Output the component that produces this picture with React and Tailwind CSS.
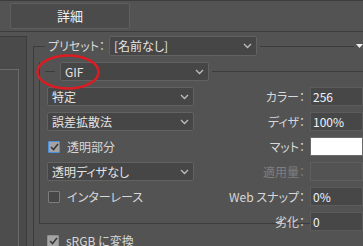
const LINE = 'bg-[#3c3c3c]';

function Chevron() {
  return (
    <svg width="9" height="6" viewBox="0 0 9 6" className="shrink-0">
      <polyline points="1,1 4.5,4.5 8,1" fill="none" stroke="#bdbdbd" strokeWidth="1.3" />
    </svg>
  );
}

function Dropdown({ label, className = '' }) {
  return (
    <div
      className={`flex items-center justify-between h-[19px] rounded-[2px] border border-[#626262] bg-[#464646] pl-[4px] pr-[4px] text-[#e4e4e4] ${className}`}
    >
      <span className="leading-none">{label}</span>
      <Chevron />
    </div>
  );
}

function Check({ checked, focus }) {
  return (
    <div
      className={`flex items-center justify-center w-[12px] h-[12px] shrink-0 rounded-[1px] border ${
        focus ? 'border-[#4a8fe0]' : checked ? 'border-[#8f8f8f]' : 'border-[#7c7c7c]'
      } ${checked ? 'bg-[#a3a3a3]' : 'bg-[#474747]'}`}
    >
      {checked ? (
        <svg width="9" height="8" viewBox="0 0 9 8">
          <polyline points="1,4 3.5,6.5 8,1" fill="none" stroke="#3a3a3a" strokeWidth="1.6" />
        </svg>
      ) : null}
    </div>
  );
}

function Field({ label, value, disabled, swatch }) {
  return (
    <div className="flex items-center justify-end h-[19px]">
      <span className={`mr-[5px] ${disabled ? 'text-[#7f7f7f]' : 'text-[#d8d8d8]'}`}>{label}</span>
      <div
        className={`w-[53px] h-[19px] shrink-0 border flex items-center pl-[2px] ${
          swatch
            ? 'bg-white border-[#6a6a6a] h-[16px]'
            : disabled
            ? 'bg-[#535353] border-[#5e5e5e]'
            : 'bg-[#474747] border-[#5c5c5c]'
        } text-[#eef3ff]`}
      >
        {value}
      </div>
    </div>
  );
}

export default function App() {
  return (
    <div className="relative w-[363px] h-[246px] overflow-hidden bg-[#535353] text-[12px] text-[#d8d8d8] font-['Noto_Sans_CJK_JP',sans-serif] [font-feature-settings:'palt']">
      {/* top band */}
      <div className="h-[32px] border-t border-b border-[#3c3c3c] pt-[2px] pl-[10px]">
        <div className="flex items-center justify-center w-[120px] h-[26px] rounded-[2px] border border-[#5f5f5f] bg-[#4b4b4b] text-[13px] text-[#efefef]">
          詳細
        </div>
      </div>

      <div className="flex">
        {/* left preview panel */}
        <div className="mt-[4px] w-[27px] h-[210px] shrink-0 border-t border-r border-[#3c3c3c] bg-[#4a4a4a] pt-[32px]">
          <div className="w-[19px] h-[200px] border-t border-r border-[#6b6b6b] bg-[#4d4d4d]" />
        </div>

        {/* settings */}
        <div className="ml-[6px] flex-1 mt-[14px] border-l border-[#3c3c3c]">
          <div className="-mt-[10px] flex items-center h-[20px]">
            <div className={`w-[11px] h-px ${LINE}`} />
            <span className="ml-[3px] w-[61px] leading-none">プリセット：</span>
            <Dropdown label="[名前なし]" className="w-[148px] h-[20px]" />
            <div className={`ml-[3px] flex-1 h-px ${LINE}`} />
            <svg width="7" height="5" viewBox="0 0 7 5" className="ml-[2px] shrink-0">
              <polygon points="0,0 7,0 3.5,4" fill="#f0f0f0" />
            </svg>
          </div>

          <div className="ml-[5px] mt-[15px] h-[162px] border-l border-b border-[#3c3c3c]">
            <div className="-mt-[9px] flex items-center h-[19px]">
              <div className={`ml-[5px] w-[10px] h-px ${LINE}`} />
              <Dropdown label="GIF" className="ml-[5px] w-[149px]" />
              <div className={`ml-[3px] flex-1 h-px ${LINE}`} />
            </div>

            <div className="mt-[6px] grid grid-cols-[155px_1fr] gap-y-[6px] grid-rows-[repeat(6,19px)]">
              <Dropdown label="特定" className="ml-[7px] w-[147px]" />
              <Field label="カラー：" value="256" />

              <Dropdown label="誤差拡散法" className="ml-[7px] w-[147px]" />
              <Field label="ディザ：" value="100%" />

              <div className="flex items-center ml-[8px]">
                <Check checked focus />
                <span className="ml-[7px]">透明部分</span>
              </div>
              <Field label="マット：" swatch />

              <Dropdown label="透明ディザなし" className="ml-[7px] w-[147px]" />
              <Field label="適用量：" disabled />

              <div className="flex items-center ml-[8px]">
                <Check />
                <span className="ml-[7px]">インターレース</span>
              </div>
              <Field label="Web スナップ：" value="0%" />

              <div />
              <Field label="劣化：" value="0" />
            </div>
          </div>

          <div className="ml-[13px] mt-[11px] flex items-start h-[14px]">
            <Check checked />
            <span className="ml-[7px] -mt-[1px] leading-[14px]">sRGB に変換</span>
          </div>
        </div>
      </div>

      {/* red annotation around the format menu */}
      <svg className="absolute left-[35px] top-[53px]" width="66" height="38" viewBox="0 0 66 38">
        <ellipse cx="33" cy="19" rx="30.5" ry="16.5" fill="none" stroke="#dc1c22" strokeWidth="2.4" />
      </svg>
    </div>
  );
}
